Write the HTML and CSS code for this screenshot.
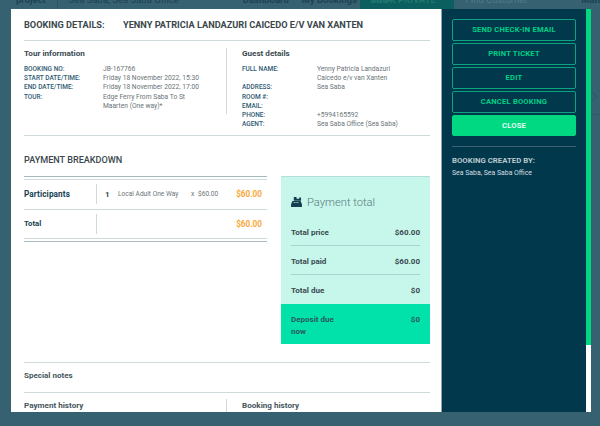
FILE: index.html
```html
<!DOCTYPE html>
<html lang="en">

<head>
  <meta charset="UTF-8">
  <title>Booking details</title>
  <link rel="stylesheet" href="styles.css">
</head>

<body>
  <div class="topbar">
    <span class="top-logo">project</span>
    <span class="top-office">Sea Saba, Sea Saba Office</span>
    <span class="top-link top-dash">Dashboard</span>
    <span class="top-link">My Bookings</span>
    <span class="top-book">BOOK PRIVATE TRIP</span>
    <span class="top-find">Find Customer</span>
    <span class="top-more">Man</span>
  </div>

  <!-- bits of the page that show right of the modal -->
  <svg class="bg-chevron" viewBox="0 0 5 9" width="5" height="9">
    <path fill="none" stroke="#2a5a6b" stroke-width="1.200" d="M0.500 0.500L4.300 4.500L0.500 8.500" />
  </svg>
  <div class="bg-line"></div>

  <div class="modal">
    <div class="main">
      <h1 class="title"><span class="title-label">BOOKING DETAILS:</span><span>YENNY PATRICIA LANDAZURI CAICEDO E/V VAN XANTEN</span></h1>

      <div class="info">
        <div class="info-col">
          <h2 class="sub">Tour information</h2>
          <dl class="facts">
            <dt>BOOKING NO:</dt><dd>JB-167766</dd>
            <dt>START DATE/TIME:</dt><dd>Friday 18 November 2022, 15:30</dd>
            <dt>END DATE/TIME:</dt><dd>Friday 18 November 2022, 17:00</dd>
            <dt>TOUR:</dt><dd>Edge Ferry From Saba To St Maarten (One way)*</dd>
          </dl>
        </div>
        <div class="info-col info-guest">
          <h2 class="sub">Guest details</h2>
          <dl class="facts facts-guest">
            <dt>FULL NAME:</dt><dd>Yenny Patricia Landazuri Caicedo e/v van Xanten</dd>
            <dt>ADDRESS:</dt><dd>Sea Saba</dd>
            <dt>ROOM #:</dt><dd></dd>
            <dt>EMAIL:</dt><dd></dd>
            <dt>PHONE:</dt><dd>+5994165592</dd>
            <dt>AGENT:</dt><dd>Sea Saba Office (Sea Saba)</dd>
          </dl>
        </div>
      </div>

      <h2 class="section">PAYMENT BREAKDOWN</h2>

      <div class="payment">
        <div class="lines">
          <div class="line line-first">
            <div class="line-name line-name-big">Participants</div>
            <div class="line-body">
              <b class="qty">1</b>
              <span class="desc">Local Adult One Way</span>
              <span class="times">x</span>
              <span class="unit">$60.00</span>
              <span class="price">$60.00</span>
            </div>
          </div>
          <div class="line line-last">
            <div class="line-name">Total</div>
            <div class="line-body"><span class="price">$60.00</span></div>
          </div>
        </div>

        <div class="total">
          <div class="total-head">
            <svg class="till" viewBox="0 0 12 11" width="11" height="10">
              <path fill="#143f50" d="M3 0h3v2h3V0.500h2V4H3zM1.500 4.500h9L12 8v3H0V8zM3 5.500v1h1v-1zM5 5.500v1h1v-1zM7 5.500v1h1v-1z" />
            </svg>
            <span>Payment total</span>
          </div>
          <div class="total-row total-line"><span>Total price</span><span>$60.00</span></div>
          <div class="total-row total-line"><span>Total paid</span><span>$60.00</span></div>
          <div class="total-row"><span>Total due</span><span>$0</span></div>
          <div class="total-row deposit"><span class="deposit-name">Deposit due now</span><span>$0</span></div>
        </div>
      </div>

      <h3 class="notes">Special notes</h3>

      <div class="history">
        <h3 class="history-col">Payment history</h3>
        <h3 class="history-col history-right">Booking history</h3>
      </div>
    </div>

    <div class="side">
      <a class="btn">SEND CHECK-IN EMAIL</a>
      <a class="btn">PRINT TICKET</a>
      <a class="btn">EDIT</a>
      <a class="btn">CANCEL BOOKING</a>
      <a class="btn btn-solid">CLOSE</a>
      <div class="created">
        <h4>BOOKING CREATED BY:</h4>
        <p>Sea Saba, Sea Saba Office</p>
      </div>
    </div>

    <div class="scroll"><div class="scroll-thumb"></div></div>
  </div>
</body>

</html>
```

FILE: styles.css
```css
* {
  margin: 0;
  padding: 0;
  box-sizing: border-box;
}

body {
  position: relative;
  width: 600px;
  height: 426px;
  overflow: hidden;
  background: #366170;
  font-family: Roboto, "Liberation Sans", sans-serif;
  color: #3b4a50;
}

/* page behind the modal, only the bottom of its text is in view */
.topbar {
  display: flex;
  align-items: stretch;
  height: 9px;
  overflow: hidden;
  font-size: 9.500px;
  line-height: 0;
  color: #1d4353;
}

.top-logo {
  width: 57px;
  padding-left: 16px;
  font-weight: 700;
}

.top-office {
  width: 177px;
  padding-left: 11px;
  border-left: 1px solid #2d5565;
}

.top-link {
  font-weight: 700;
  width: 59.500px;
}

.top-dash {
  margin-left: 11px;
}

.top-book {
  width: 94px;
  padding-left: 10px;
  background: #0b5f5e;
  font-weight: 700;
  color: #1f7770;
}

.top-find {
  width: 129px;
  padding-left: 12px;
  color: #537a87;
}

.top-more {
  font-weight: 700;
}

.bg-chevron {
  position: absolute;
  left: 592px;
  top: 92px;
}

.bg-line {
  position: absolute;
  left: 591px;
  top: 114px;
  width: 9px;
  height: 1px;
  background: #2f5a69;
}

.modal {
  display: flex;
  width: 580px;
  height: 403px;
  margin-left: 11px;
  background: #fff;
  overflow: hidden;
}

.main {
  width: 430px;
  padding: 0 11px 0 13px;
  flex: none;
  overflow: hidden;
}

.title {
  display: flex;
  height: 32px;
  padding-top: 8px;
  border-bottom: 1px solid #cfdadd;
  font-size: 9.200px;
  line-height: 15px;
  font-weight: 700;
  color: #3a474c;
}

.title-label {
  width: 99px;
}

.info {
  display: flex;
  height: 95px;
  border-bottom: 1px solid #cfdadd;
  padding-top: 7px;
}

.info-col {
  width: 202px;
  height: 66px;
}

.info-guest {
  width: 203px;
  padding-left: 15px;
  border-left: 1px solid #cfdadd;
}

.sub {
  font-size: 8.100px;
  line-height: 10px;
  font-weight: 700;
  color: #3b4a50;
  margin-bottom: 7px;
}

.facts {
  display: grid;
  grid-template-columns: 79px 1fr;
  font-size: 6.700px;
  line-height: 9.200px;
}

.facts-guest {
  grid-template-columns: 75px 1fr;
}

.facts dt {
  font-size: 6.500px;
  font-weight: 500;
  color: #2f5a72;
}

.facts dd {
  color: #6b7478;
  min-height: 9.200px;
  padding-right: 20px;
}

.section {
  margin-top: 19px;
  font-size: 9.100px;
  line-height: 11px;
  font-weight: 500;
  color: #3a474c;
}

.payment {
  display: flex;
  margin-top: 10px;
  align-items: flex-start;
}

.lines {
  width: 243px;
  flex: none;
  border-top: 1px solid #a4bac1;
  padding-top: 2px;
}

.line {
  display: flex;
  height: 30px;
  border-top: 1px solid #cfdadd;
  padding-top: 4px;
}

.line-last {
  border-bottom: 1px solid #cfdadd;
  height: 30px;
  box-shadow: 0 2px 0 #fff, 0 3px 0 #a9bcc3;
}

.line-name {
  width: 73px;
  height: 20px;
  border-right: 1px solid #cfdadd;
  font-size: 7.700px;
  line-height: 20px;
  font-weight: 700;
  color: #143f50;
}

.line-name-big {
  font-size: 8.200px;
  letter-spacing: 0.100px;
}

.line-body {
  flex: 1;
  display: flex;
  align-items: center;
  height: 20px;
  padding: 0 5px 0 8px;
  font-size: 6.600px;
  color: #6b7478;
}

.qty {
  width: 13px;
  font-size: 8px;
  color: #3b4a50;
}

.desc {
  width: 73px;
}

.times {
  width: 7px;
}

.price {
  margin-left: auto;
  font-size: 8.200px;
  font-weight: 700;
  color: #f9a83b;
}

.total {
  width: 149px;
  height: 168px;
  margin-left: 14px;
  background: #c6f7ea;
  border-top: 1px solid #b6dcdc;
  padding-top: 17px;
}

.total-head {
  display: flex;
  align-items: center;
  gap: 5px;
  height: 16px;
  margin: 0 10px 7px;
  font-size: 11.200px;
  font-weight: 300;
  color: #5a7880;
}

.total-row {
  display: flex;
  justify-content: space-between;
  height: 29px;
  margin: 0 10px;
  padding-top: 10px;
  font-size: 8px;
  line-height: 12px;
  font-weight: 700;
  color: #3b4a50;
}

.total-line {
  border-bottom: 1px solid #a6d6d2;
}

.deposit {
  height: 40px;
  margin: 0;
  padding: 10px 10px 0;
  background: #00e2a9;
  color: #2a5a5e;
}

.deposit-name {
  width: 50px;
}

.notes {
  margin-top: 18px;
  height: 31px;
  padding-top: 7px;
  border-top: 1px solid #cfdadd;
  border-bottom: 1px solid #cfdadd;
  font-size: 8px;
  line-height: 11px;
  font-weight: 700;
  color: #46565c;
}

.history {
  display: flex;
  padding-top: 6px;
}

.history-col {
  width: 202px;
  height: 14px;
  font-size: 8.100px;
  line-height: 13px;
  font-weight: 700;
  color: #46565c;
}

.history-right {
  width: 203px;
  padding-left: 15px;
  border-left: 1px solid #cfdadd;
}

.side {
  width: 145px;
  flex: none;
  padding: 10px 10px 0;
  border-left: 1px solid #8fa6af;
  background: #02384c;
}

.btn {
  display: block;
  height: 22px;
  margin-bottom: 2px;
  border: 1px solid #0ea37e;
  border-radius: 2px;
  text-align: center;
  font-size: 7.600px;
  line-height: 20px;
  font-weight: 700;
  letter-spacing: 0.200px;
  color: #00d084;
}

.btn-solid {
  height: 21px;
  margin-bottom: 10px;
  background: #00d982;
  border-color: #00d982;
  color: #e4fbf2;
}

.created {
  border-top: 1px solid #3d6373;
  padding-top: 9px;
  color: #d5dee2;
}

.created h4 {
  font-size: 7.800px;
  line-height: 10px;
  font-weight: 700;
  color: #b9c8cd;
  margin-bottom: 3px;
}

.created p {
  font-size: 6.900px;
  line-height: 9px;
}

.scroll {
  width: 5px;
  flex: none;
  background: #fff;
}

.scroll-thumb {
  height: 336px;
  background: #00d982;
}
```
